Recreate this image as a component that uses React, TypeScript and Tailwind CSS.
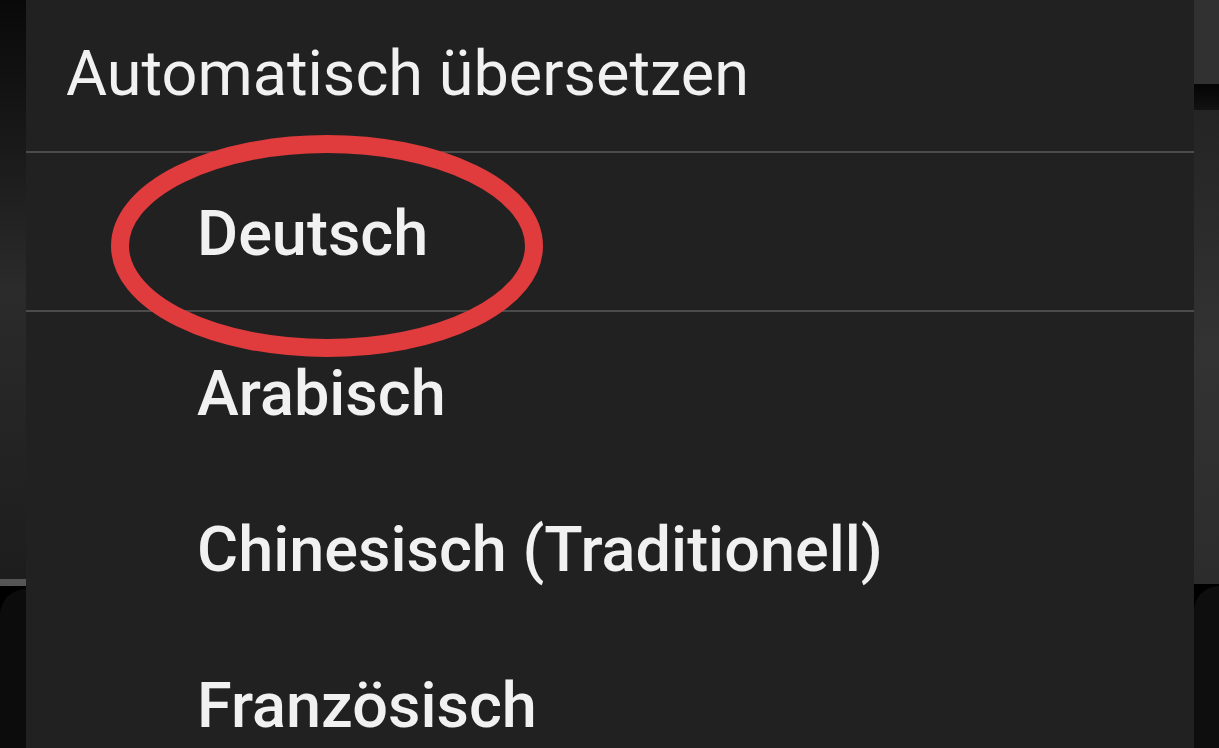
import React from "react";

const options = ["Arabisch", "Chinesisch (Traditionell)", "Französisch"];

export default function App() {
  return (
    <div
      className="flex h-[748px] w-[1219px] overflow-hidden bg-black"
      style={{ fontFamily: "Roboto, 'Noto Sans', sans-serif" }}
    >
      {/* left backdrop strip */}
      <div className="flex w-[26px] shrink-0 flex-col">
        <div className="h-[579px] shrink-0 bg-gradient-to-b from-[#090909] via-[#2b2b2b] to-[#1d1d1d]" />
        <div className="h-[7px] shrink-0 bg-[#555555]" />
        <div className="flex-1 bg-black pt-[3px]">
          <div className="h-full rounded-tl-[40px] bg-[#0c0c0c]" />
        </div>
      </div>

      {/* menu panel */}
      <div className="relative flex w-[1168px] shrink-0 flex-col bg-[#212121] text-[#f1f1f1]">
        <div className="h-[151px] shrink-0 pl-[40px] pt-[42px] text-[63px] font-normal leading-none">
          Automatisch übersetzen
        </div>
        <div className="h-[2px] shrink-0 bg-[#4b4b4b]" />
        <div className="h-[157px] shrink-0 pl-[171px] pt-[49px] text-[63px] font-medium leading-none">
          Deutsch
        </div>
        <div className="h-[2px] shrink-0 bg-[#4b4b4b]" />
        {options.map((o) => (
          <div
            key={o}
            className="h-[156px] shrink-0 pl-[171px] pt-[50px] text-[63px] font-medium leading-none"
          >
            {o}
          </div>
        ))}

        {/* red hand-drawn circle annotation */}
        <svg
          className="pointer-events-none absolute left-[84px] top-[135px]"
          width="434"
          height="224"
          viewBox="0 0 434 224"
        >
          <ellipse
            cx="217"
            cy="111"
            rx="207"
            ry="102"
            fill="none"
            stroke="#e03b3d"
            strokeWidth="18"
          />
        </svg>
      </div>

      {/* right backdrop strip */}
      <div className="flex flex-1 flex-col">
        <div className="h-[84px] shrink-0 bg-[#313131]" />
        <div className="h-[26px] shrink-0 bg-gradient-to-b from-[#050505] to-[#121212]" />
        <div className="h-[474px] shrink-0 bg-gradient-to-b from-[#242424] via-[#333333] to-[#2c2c2c]" />
        <div className="flex-1 bg-black pt-[2px]">
          <div className="h-full rounded-tl-[34px] bg-[#0e0e0e]" />
        </div>
      </div>
    </div>
  );
}
